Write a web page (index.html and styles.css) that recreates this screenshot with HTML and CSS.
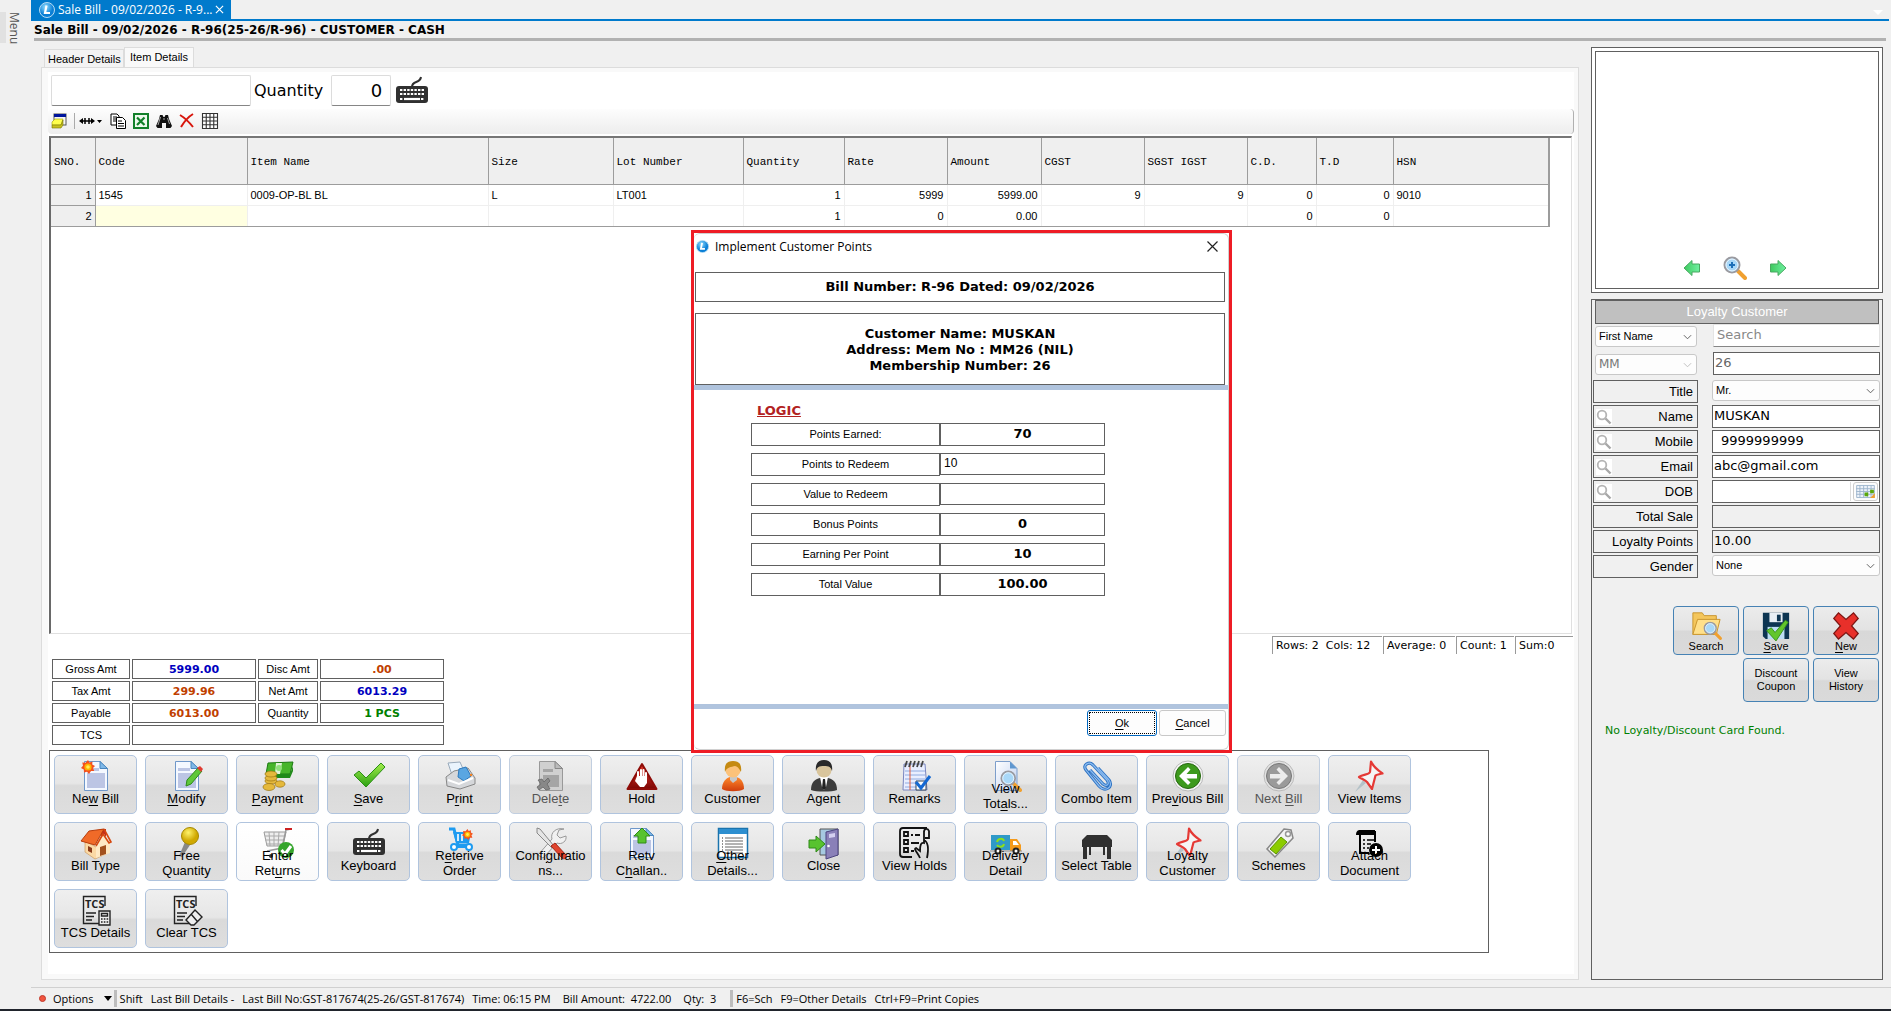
FILE: index.html
```html
<!DOCTYPE html>
<html lang="en">
<head>
<meta charset="utf-8">
<title>Sale Bill</title>
<link rel="stylesheet" href="styles.css">
</head>
<body>
<svg class="sprite" aria-hidden="true">
  <defs>
    <linearGradient id="gPaper" x1="0" y1="0" x2="1" y2="1"><stop offset="0" stop-color="#fff"/><stop offset="1" stop-color="#bfd0f0"/></linearGradient>
    <linearGradient id="gGreen" x1="0" y1="0" x2="0" y2="1"><stop offset="0" stop-color="#a4ee4c"/><stop offset="1" stop-color="#2aa012"/></linearGradient>
    <linearGradient id="gRed" x1="0" y1="0" x2="0" y2="1"><stop offset="0" stop-color="#e43a2c"/><stop offset="1" stop-color="#7c0705"/></linearGradient>
    <linearGradient id="gOrange" x1="0" y1="0" x2="0" y2="1"><stop offset="0" stop-color="#ff8a2b"/><stop offset="1" stop-color="#cf3d0c"/></linearGradient>
    <radialGradient id="gGold" cx=".4" cy=".3"><stop offset="0" stop-color="#fff36a"/><stop offset="1" stop-color="#d0a800"/></radialGradient>
    <radialGradient id="gLogo" cx=".4" cy=".3"><stop offset="0" stop-color="#8fdcff"/><stop offset="1" stop-color="#0a7fd6"/></radialGradient>
    <linearGradient id="gMint" x1="0" y1="0" x2="1" y2="0"><stop offset="0" stop-color="#3ec95f"/><stop offset="1" stop-color="#6ff0a0"/></linearGradient>
    <symbol id="doc" viewBox="0 0 32 32"><path d="M4.500 1.500H20l7.500 7V30.500H4.500z" fill="#f4f8ff" stroke="#6f97c9"/><path d="M7 8h12v3H7zM7 13h18v15H7z" fill="#bcc5e4"/><path d="M20 1.500v7h7.500z" fill="#7fb8e8" stroke="#4a86bd"/></symbol>
    <symbol id="spark" viewBox="0 0 14 14"><path d="M7 0l1.500 2.500L11.500 1.500l-.3 3L14 6l-2 2 1.200 3-3.200 0L8 14l-2-2.200L3 12.500l-.2-3L0 8l2-2.200L1.300 2.500l3.200.3z" fill="#f4511e"/><circle cx="7" cy="7" r="3.600" fill="#ffb300"/><circle cx="7" cy="7" r="1.800" fill="#ffee58"/></symbol>
    <symbol id="keyboard" viewBox="0 0 32 32"><path d="M16 12c0-7 8-3 9-10" fill="none" stroke="#303030" stroke-width="2"/><rect x="0" y="11" width="32" height="17" rx="3" fill="#303030"/><path d="M4 15h24M4 19h24M4 24h3M25 24h3" stroke="#fff" stroke-width="2.200" stroke-dasharray="2.400 1.200"/><path d="M8 24h16" stroke="#fff" stroke-width="2.200"/></symbol>
    <symbol id="pin" viewBox="0 0 32 32"><path d="M9 20L1 32l11-9z" fill="#b4c2c8"/><path d="M17 1.500c3 6 6 8 11.500 12-4 1-6 1-7 2L18 29l-5-7c-2-2-5-3-8-5 4-3 10-2 11-5z" fill="#f5f5f5" stroke="#e53935" stroke-width="2.200" stroke-linejoin="round"/></symbol>
    <symbol id="glass" viewBox="0 0 24 24"><path d="M15 15l7 7" stroke="#f0a030" stroke-width="4" stroke-linecap="round"/><circle cx="9" cy="9" r="7.500" fill="#a9d8f8" stroke="#9a9aa0" stroke-width="2"/><circle cx="9" cy="9" r="6" fill="none" stroke="#eaf6ff"/></symbol>
    <symbol id="lens" viewBox="0 0 16 16"><circle cx="6" cy="6" r="4.300" fill="none" stroke="#b4b4b4" stroke-width="1.800"/><path d="M9.500 9.500l5 5" stroke="#a8a8a8" stroke-width="2.400"/></symbol>
    <symbol id="chev" viewBox="0 0 10 6"><path d="M1 1l4 4 4-4" fill="none" stroke="currentColor"/></symbol>
    <symbol id="logo" viewBox="0 0 16 16"><circle cx="8" cy="8" r="7.500" fill="url(#gLogo)" stroke="#b7dcf3"/><path d="M7.500 3.500L6 11h5" fill="none" stroke="#fff" stroke-width="2.200"/></symbol>
    <symbol id="tcsdoc" viewBox="0 0 32 32"><path d="M25 12V2.500H3.500V29.500H19M6 19h10M6 22.500h8M6 26h6" fill="none" stroke="#222" stroke-width="1.400"/><text x="5" y="14" class="tcs">TCS</text></symbol>
  </defs>
</svg>
<div class="app">
  <aside class="rail"><button class="rail-menu" type="button">Menu</button></aside>
  <div class="shell">
    <nav class="doc-tabs">
      <div class="doc-tab"><svg class="i16"><use href="#logo"/></svg><span>Sale Bill - 09/02/2026 - R-9...</span><button class="tab-x" type="button" aria-label="Close tab"><svg viewBox="0 0 10 10"><path d="M1 1l8 8M9 1L1 9" stroke="#fff" stroke-width="1.300"/></svg></button></div>
      <svg class="strip-caret" viewBox="0 0 10 6"><path d="M0 1h10L5 6z" fill="#fff"/></svg>
    </nav>
    <h1 class="title">Sale Bill - 09/02/2026 - R-96(25-26/R-96) - CUSTOMER - CASH</h1>
    <div class="work">
      <main class="bill">
        <div class="tabs"><button class="tab" type="button">Header Details</button><button class="tab on" type="button">Item Details</button></div>
        <section class="panel"><div class="sheet">
          <div class="entry">
            <input class="field code" type="text" aria-label="Item code">
            <label for="qty">Quantity</label>
            <input class="field qty" id="qty" type="text" value="0">
            <button class="bare" type="button" aria-label="Keyboard"><svg class="i32"><use href="#keyboard"/></svg></button>
          </div>
          <div class="toolbar">
            <button class="bare" type="button" aria-label="Preview"><svg class="i16" viewBox="0 0 16 16"><rect x="3" y="1" width="12" height="11" fill="#f5f5f5" stroke="#555"/><path d="M3 1h12v3H3z" fill="#00159c"/><path d="M1 9l3-3h8l-2 6H1z" fill="#ffff4d" stroke="#9a9a00" stroke-width=".6"/><path d="M1 12h9l2-5v5l-2 3H1z" fill="#c8c020" stroke="#777700" stroke-width=".6"/></svg></button>
            <i class="vbar"></i>
            <button class="bare" type="button" aria-label="Column width"><svg class="i24" viewBox="0 0 24 16"><path d="M2 8h12M6 5v6M10 5v6" stroke="#000" stroke-width="1.500"/><path d="M0 8l4-3v6zM16 8l-4-3v6zM18 7h5l-2.500 3z"/></svg></button>
            <button class="bare" type="button" aria-label="Copy"><svg class="i16" viewBox="0 0 16 16"><path d="M1 1h6l2 2v9H1z" fill="#fff" stroke="#000"/><path d="M3 4h4M3 6h4M3 8h4" stroke="#000"/><path d="M6.500 4.500h6l3 3v8h-9z" fill="#fff" stroke="#000"/><path d="M8 8h4M8 10.500h6M8 13h6" stroke="#000"/></svg></button>
            <button class="bare" type="button" aria-label="Export to Excel"><svg class="i16" viewBox="0 0 16 16"><rect x="1" y="1" width="14" height="14" fill="#eefaee" stroke="#12802a" stroke-width="2"/><path d="M4 4.500l7.500 7.500M11.500 4.500L4 12" stroke="#12802a" stroke-width="2.200"/></svg></button>
            <button class="bare" type="button" aria-label="Find"><svg class="i16" viewBox="0 0 16 16"><path d="M4 2h2.500l1 2h1l1-2H12l1 4 3 7-1.500 2H10V10H6v5H1.500L0 13l3-7z" fill="#111"/><path d="M4.500 4L2 12M11.500 5l2 6M7 6h2" stroke="#ccc" stroke-width=".8"/></svg></button>
            <button class="bare" type="button" aria-label="Delete row"><svg class="i16" viewBox="0 0 16 16"><path d="M1 2c5 3 9 7 13 12M14 1C9 4 5 9 2 14" fill="none" stroke="#d8160c" stroke-width="2"/></svg></button>
            <button class="bare" type="button" aria-label="Grid"><svg class="i16" viewBox="0 0 16 16"><path d="M.5.500h15v15H.5zM4.250.500v15M8 .500v15M11.750.500v15M.5 4.250h15M.5 8h15M.5 11.750h15" fill="#fff" stroke="#333" stroke-width="1.100"/></svg></button>
          </div>
          <div class="grid">
            <table class="items">
              <colgroup><col class="w44"><col class="w152"><col class="w241"><col class="w125"><col class="w130"><col class="w101"><col class="w103"><col class="w94"><col class="w103"><col class="w103"><col class="w69"><col class="w77"><col class="wlast"></colgroup>
              <thead><tr><th>SNO.</th><th>Code</th><th>Item Name</th><th>Size</th><th>Lot Number</th><th>Quantity</th><th>Rate</th><th>Amount</th><th>CGST</th><th>SGST IGST</th><th>C.D.</th><th>T.D</th><th>HSN</th></tr></thead>
              <tbody>
                <tr><td class="n sno">1</td><td>1545</td><td>0009-OP-BL BL</td><td>L</td><td>LT001</td><td class="n">1</td><td class="n">5999</td><td class="n">5999.00</td><td class="n">9</td><td class="n">9</td><td class="n">0</td><td class="n">0</td><td>9010</td></tr>
                <tr><td class="n sno">2</td><td class="cur"></td><td></td><td></td><td></td><td class="n">1</td><td class="n">0</td><td class="n">0.00</td><td></td><td></td><td class="n">0</td><td class="n">0</td><td></td></tr>
              </tbody>
            </table>
          </div>
          <div class="counts"><span class="c1">Rows: 2&nbsp; Cols: 12</span><span class="c2">Average: 0</span><span class="c3">Count: 1</span><span class="c3">Sum:0</span></div>
          <div class="totals">
            <span>Gross Amt</span><b class="blue">5999.00</b><span>Disc Amt</span><b class="rust">.00</b>
            <span>Tax Amt</span><b class="rust">299.96</b><span>Net Amt</span><b class="blue">6013.29</b>
            <span>Payable</span><b class="rust">6013.00</b><span>Quantity</span><b class="green">1 PCS</b>
            <span>TCS</span><b class="wide"></b>
          </div>
          <div class="tiles">
            <button class="tile" type="button"><svg viewBox="0 0 32 32"><use href="#doc"/><use href="#spark" x="1" y="0" width="14" height="14"/></svg><span>Ne<u>w</u> Bill</span></button>
            <button class="tile" type="button"><svg viewBox="0 0 32 32"><use href="#doc"/><path d="M27 8l4 3-11 13-5 2 1-6z" fill="#5fc83a" stroke="#2f8a18"/><path d="M26 8l3-2 3 3-2 3z" fill="#e03a30"/></svg><span><u>M</u>odify</span></button>
            <button class="tile" type="button"><svg viewBox="0 0 32 32"><path d="M6 3l25-1-3 12H4z" fill="#46b52a" stroke="#1c7a12"/><path d="M4 14h24l3-8v5l-3 7H5z" fill="#1f8a18"/><path d="M14 3h6l-2 11h-5z" fill="#dff3d6"/><circle cx="17" cy="8" r="3" fill="#8fe07a"/><g fill="#e5b93c" stroke="#9c7410" stroke-width=".7"><ellipse cx="9" cy="21" rx="6" ry="3"/><ellipse cx="9" cy="18" rx="6" ry="3"/><ellipse cx="9" cy="14" rx="6" ry="3"/><ellipse cx="7" cy="27" rx="6" ry="3.500"/><ellipse cx="18" cy="24" rx="5" ry="3.200"/></g></svg><span><u>P</u>ayment</span></button>
            <button class="tile" type="button"><svg viewBox="0 0 32 32"><path d="M1 15l5-4 7 7L28 3l4 4-19 20z" fill="url(#gGreen)" stroke="#2a8f14"/></svg><span><u>S</u>ave</span></button>
            <button class="tile" type="button"><svg viewBox="0 0 32 32"><path d="M4 3l12-1 4 9-12 4z" fill="#eaf4fd" stroke="#9ab"/><path d="M2 17l8-6 14-3 7 10v6l-15 5-13-3z" fill="#d5d7da" stroke="#888"/><path d="M15 9l7-2 5 9-7 5-6-4z" fill="#5aa6e2" stroke="#2c79bd"/><path d="M4 20l11 4 14-6" fill="none" stroke="#fff" stroke-width="2"/><circle cx="27" cy="15" r="1.200" fill="#f58220"/></svg><span>P<u>r</u>int</span></button>
            <button class="tile" type="button" disabled><svg viewBox="0 0 32 32"><path d="M4.500 1.500H20l7.500 7V30.500H4.500z" fill="#d0d0d0" stroke="#999"/><path d="M8 9h10v3H8zM8 15h16v12H8z" fill="#a5a5a5"/><path d="M20 1.500v7h7.500z" fill="#bbb" stroke="#888"/><path d="M3 20l4-1 2 3 4-4 2 3-3 3 3 5-4 1-3-3-4 3-2-3 4-3z" fill="#888" stroke="#666" stroke-width=".8"/></svg><span>Dele<u>t</u>e</span></button>
            <button class="tile" type="button"><svg viewBox="0 0 32 32"><path d="M16 4L30.500 29H1.500z" fill="url(#gRed)" stroke="#8e0c08" stroke-linejoin="round" stroke-width="2"/><path d="M12 18v-6m3 5v-7m2.500 7v-7m2.500 8v-5" stroke="#fff" stroke-width="2" stroke-linecap="round"/><path d="M11 16h10v7l-3 4h-4l-5-6z" fill="#fff"/></svg><span>Hold</span></button>
            <button class="tile" type="button"><svg viewBox="0 0 32 32"><path d="M5 29c0-7 4-11 8-12h6c5 1 8 5 8 12-4 3-18 3-22 0z" fill="url(#gOrange)"/><path d="M13 15h7v5l-4 3-3-3z" fill="#c8c8c8"/><circle cx="16" cy="10" r="7.500" fill="#fcc27a"/><path d="M8 12C7 4 10 1 16 1s9 3 8 11c-2-4-4-6-6-6-4 1-8 1-10 6z" fill="#c58a12"/></svg><span>Customer</span></button>
            <button class="tile" type="button"><svg viewBox="0 0 32 32"><path d="M3 30c0-8 4-11 9-12h8c5 1 9 4 9 12-5 2-21 2-26 0z" fill="#3c3c3c"/><path d="M12 17h8l-2 10-2 3-2-3z" fill="#fff"/><path d="M15 19h2l1 9-2 2-2-2z" fill="#222"/><circle cx="16" cy="10" r="7.500" fill="#d9c59c"/><path d="M8 11C7 4 10 0 16 0s9 4 8 11c-1-4-3-5-8-5s-7 1-8 5z" fill="#2a2a2a"/></svg><span>Agent</span></button>
            <button class="tile" type="button"><svg viewBox="0 0 32 32"><path d="M5 4h21l2 26H4z" fill="#e9eeff" stroke="#7a86c0"/><path d="M6 11h20M6 15h20M6 19h20M6 23h20M6 27h20" stroke="#7a9ad8" stroke-width=".8"/><path d="M11 5v25" stroke="#e05a3a"/><path d="M6 7l2-6m2 6l2-6m2 6l2-6m2 6l2-6m2 6l2-6" stroke="#444" stroke-width="1.800"/><path d="M17 21h10v9H17z" fill="#fff" stroke="#345"/><path d="M17 22l5 6 9-12" fill="none" stroke="#1468d2" stroke-width="3"/></svg><span>Remarks</span></button>
            <button class="tile two" type="button"><svg viewBox="0 0 32 32"><path d="M5.500 1.500H20l7 7v22H5.500z" fill="url(#gPaper)" stroke="#7d9ecb"/><path d="M20 1.500v7h7z" fill="#5f97cf"/><use href="#glass" x="10" y="10" width="22" height="22"/></svg><span>View<br>Tot<u>a</u>ls...</span></button>
            <button class="tile" type="button"><svg viewBox="0 0 32 32"><path d="M9 10l13 14c4 3 7 0 4-4L12 5C8 1 1 5 5 10l13 16c6 7 15 1 10-6L17 8" fill="none" stroke="#2f74c4" stroke-width="3.200"/><path d="M9 10l13 14c4 3 7 0 4-4L12 5C8 1 1 5 5 10l13 16c6 7 15 1 10-6L17 8" fill="none" stroke="#8cbcf0" stroke-width="1.200"/></svg><span>Combo Item</span></button>
            <button class="tile" type="button"><svg viewBox="0 0 32 32"><circle cx="16" cy="16" r="15" fill="#f5f5f5" stroke="#b8b8b8"/><circle cx="16" cy="16" r="12.500" fill="#3d9a1c" stroke="#25660e"/><path d="M7 16l9-9 2.500 2.500L14.500 14H25v4.500H14.500l4 4L16 25z" fill="#fff"/></svg><span>Pre<u>v</u>ious Bill</span></button>
            <button class="tile" type="button" disabled><svg viewBox="0 0 32 32"><circle cx="16" cy="16" r="15" fill="#e2e2e2" stroke="#bbb"/><circle cx="16" cy="16" r="12.500" fill="#9a9a9a" stroke="#777"/><path d="M25 16l-9-9-2.500 2.500 4 4.500H7v4.500h10.500l-4 4L16 25z" fill="#ececec"/></svg><span>Next <u>B</u>ill</span></button>
            <button class="tile" type="button"><svg><use href="#pin"/></svg><span>View Items</span></button>

            <button class="tile" type="button"><svg viewBox="0 0 32 32"><path d="M21 2h5v9h-5z" fill="#c42b1c"/><path d="M5 14l11 6 12-3v9L15 32 5 25z" fill="#fbd9a5" stroke="#c89050" stroke-width=".6"/><path d="M16 18l8-11 6 9v10l-14 5z" fill="#ffe9c4"/><path d="M1 14L9 4l15-2-9 16z" fill="#f06a28" stroke="#b83d0c"/><path d="M24 2l7 13-2 1-6-9-7 12" fill="none" stroke="#d5480f" stroke-width="1.600"/><path d="M20 20l6-2v9l-6 2z" fill="#a3511d"/><path d="M8 19l4 2v5l-4-2z" fill="#8a3b1a"/></svg><span>Bill Type</span></button>
            <button class="tile two" type="button"><svg viewBox="0 0 32 32"><path d="M14 15l5 3-8 12-3-1z" fill="#888"/><circle cx="19" cy="9" r="8.500" fill="url(#gGold)" stroke="#a58800"/></svg><span>Free<br>Quantity</span></button>
            <button class="tile two hot" type="button"><svg viewBox="0 0 32 32"><path d="M2 5h22l-3 14H5z" fill="#eee" stroke="#999"/><path d="M3 9h20M3 13h19M4 17h18M7 5l1 14M12 5v14M17 5l-1 14" stroke="#aaa"/><path d="M29 2l-5 1-4 18-15 3" fill="none" stroke="#999" stroke-width="1.500"/><path d="M23 2h7" stroke="#c22" stroke-width="2"/><circle cx="9" cy="29" r="2" fill="#333"/><circle cx="24" cy="23" r="8" fill="#35a52c"/><path d="M19.500 23l3.500 4 6-8" fill="none" stroke="#fff" stroke-width="3"/></svg><span>Enter<br>Ret<u>u</u>rns</span></button>
            <button class="tile" type="button"><svg><use href="#keyboard"/></svg><span>Keyboard</span></button>
            <button class="tile two" type="button"><svg viewBox="0 0 32 32"><path d="M5 2h5l4 16h12" fill="none" stroke="#1e9bf0" stroke-width="3"/><path d="M9 5h18l-2 11H12z" fill="#1e9bf0"/><path d="M14 7v7M18 7v7" stroke="#fff" stroke-width="1.600"/><circle cx="10" cy="20" r="3" fill="#fff" stroke="#1e9bf0" stroke-width="2"/><circle cx="25" cy="20" r="3" fill="#fff" stroke="#1e9bf0" stroke-width="2"/><path d="M12 20h11" stroke="#1e9bf0" stroke-width="2"/><use href="#spark" x="18" y="2" width="11" height="11"/></svg><span>R<u>e</u>terive<br>Order</span></button>
            <button class="tile two" type="button"><svg viewBox="0 0 32 32"><path d="M29 2l-5 1-2 5 3 3 6-2c1 5-4 9-9 7L8 31l-5-3L17 12c-2-6 4-12 12-10z" fill="#f1f1f1" stroke="#999"/><path d="M2 1l3 1 14 17-2 2L2 6z" fill="#e5e5e5" stroke="#888"/><path d="M16 19l4-3 11 12c1 3-2 5-4 3z" fill="#e0452e" stroke="#a82413"/></svg><span>Confi<u>g</u>uratio<br>ns...</span></button>
            <button class="tile two" type="button"><svg viewBox="0 0 32 32"><use href="#doc"/><path d="M16 1l8 8h-4v7h-8V9H8z" fill="#58c32f" stroke="#2f8a18"/></svg><span>Retv<br>C<u>h</u>allan..</span></button>
            <button class="tile two" type="button"><svg viewBox="0 0 32 32"><rect x="1.500" y="1.500" width="29" height="29" fill="#fff" stroke="#1b73ad" stroke-width="1.500"/><path d="M2 2h28v5H2z" fill="#2d8fd0"/><path d="M8 11h18M8 14h18M8 17h18M8 20h18M8 23h18M8 26h18" stroke="#666"/><path d="M5 11h1M5 14h1M5 17h1M5 20h1M5 23h1" stroke="#222"/></svg><span><u>O</u>ther<br>Details...</span></button>
            <button class="tile" type="button"><svg viewBox="0 0 32 32"><path d="M12 2h18v26H12z" fill="#a6c9e0" stroke="#555"/><path d="M18 5l12-3v26l-12 4z" fill="#8a80b8" stroke="#4d4580"/><path d="M21 7l6-1v4l-6 1z" fill="#d4d0f0"/><circle cx="20.500" cy="19" r="1.300" fill="#fff"/><path d="M1 13h7V9l9 8-9 8v-4H1z" fill="#58c32f" stroke="#2f8a18"/></svg><span>Close</span></button>
            <button class="tile" type="button"><svg viewBox="0 0 32 32" fill="none" stroke="#111" stroke-width="1.800"><path d="M25 10V5c0-4 4-4 5-1v7h-4M28 1H4C2 1 1 2 1 4v23c0 2 1 3 3 3h9M25 4v12c-3-1-4 2-4 8l-4-3c-3 1 2 5 4 10M25 13c4 2 5 8 3 18"/><path d="M5 5h4v4H5zM5 13h4v4H5zM5 21h4v4H5zM12 8h2M16 8h5M12 16h8M12 24h3"/></svg><span>View Holds</span></button>
            <button class="tile two" type="button"><svg viewBox="0 0 32 32"><path d="M1 8h19v15H1z" fill="#2f9ac8"/><path d="M20 12h7l4 6v6H20z" fill="#f59a1a"/><path d="M23 14h3l3 4h-6z" fill="#fff"/><path d="M7 15c1-4 6-4 7-1m0 3c-1 4-6 3-7 1" fill="none" stroke="#8de01a" stroke-width="2"/><path d="M0 24h32" stroke="#888"/><g fill="#fff" stroke="#222" stroke-width="2"><circle cx="8" cy="24" r="2.500"/><circle cx="26" cy="24" r="2.500"/></g></svg><span>Delivery<br>Detail</span></button>
            <button class="tile" type="button"><svg viewBox="0 0 32 32" fill="#303030"><path d="M6 8h20l5 5v7H1v-7z"/><path d="M2 19h4v13H2zM26 19h4v13h-4zM8 20h2v8H8zM22 20h2v8h-2z"/></svg><span>Select Table</span></button>
            <button class="tile two" type="button"><svg><use href="#pin"/></svg><span>Loyalty<br>Customer</span></button>
            <button class="tile" type="button"><svg viewBox="0 0 32 32"><path d="M21 2l7 1 2 8-18 19-8-8z" fill="#f4f4f4" stroke="#888" stroke-width="1.500"/><path d="M18 10l6 5-11 12-6-5z" fill="#8ccc00" stroke="#5c9400"/><circle cx="25" cy="7" r="2.500" fill="#fff" stroke="#999" stroke-width="1.500"/></svg><span>Schemes</span></button>
            <button class="tile two" type="button"><svg viewBox="0 0 32 32"><path d="M2 8c0-4 2-5 4-5h15v5z"/><path d="M6 6v20h9M21 4v11" fill="none" stroke="#000" stroke-width="2"/><path d="M9 13h2m2 0h7M9 17h2m2 0h4M9 21h2m2 0h2" stroke="#000" stroke-width="1.600"/><circle cx="22" cy="23" r="7"/><path d="M18 23h8M22 19v8" stroke="#fff" stroke-width="2"/></svg><span>Attach<br>Document</span></button>

            <button class="tile" type="button"><svg viewBox="0 0 32 32"><use href="#tcsdoc"/><path d="M19 17h11v14H19zM21.500 19.500h6v2.500h-6z" fill="#eee" stroke="#222" stroke-width="1.400"/><path d="M21 25h8M21 28h8" stroke="#222" stroke-width="1.600" stroke-dasharray="1.600 1.200"/></svg><span>TCS Details</span></button>
            <button class="tile" type="button"><svg viewBox="0 0 32 32"><use href="#tcsdoc"/><path d="M24 16l7 7-8 8h-3l-5-5zM20 20l6 7" fill="#eee" stroke="#222" stroke-width="1.400"/></svg><span>Clear TCS</span></button>
          </div>
        </div></section>
      </main>
      <aside class="side">
        <section class="photo"><div class="photo-in">
          <button class="bare" type="button" aria-label="Previous"><svg class="i16" viewBox="0 0 16 16"><path d="M0 8l8-7.500V4h7.500v8H8v3.500z" fill="url(#gMint)" stroke="#48a860"/></svg></button>
          <button class="bare" type="button" aria-label="Zoom"><svg class="i24"><use href="#glass"/><path d="M6 9h6M9 6v6" stroke="#1d6fb8" stroke-width="2"/></svg></button>
          <button class="bare" type="button" aria-label="Next"><svg class="i16" viewBox="0 0 16 16"><path d="M16 8L8 .500V4H.500v8H8v3.500z" fill="url(#gMint)" stroke="#48a860"/></svg></button>
        </div></section>
        <section class="loyal">
          <h2>Loyalty Customer</h2>
          <form class="search">
            <span class="pick"><select aria-label="Search by"><option>First Name</option></select><svg><use href="#chev"/></svg></span>
            <input class="v soft" type="text" placeholder="Search" aria-label="Search text">
            <span class="pick off"><select aria-label="Series" disabled><option>MM</option></select><svg><use href="#chev"/></svg></span>
            <input class="v dim" type="text" value="26" aria-label="Member number">
          </form>
          <form class="fields">
            <label for="f1">Title</label><span class="pick"><select id="f1"><option>Mr.</option></select><svg><use href="#chev"/></svg></span>
            <label for="f2"><svg><use href="#lens"/></svg>Name</label><input class="v" id="f2" type="text" value="MUSKAN">
            <label for="f3"><svg><use href="#lens"/></svg>Mobile</label><input class="v in" id="f3" type="text" value="9999999999">
            <label for="f4"><svg><use href="#lens"/></svg>Email</label><input class="v" id="f4" type="text" value="abc@gmail.com">
            <label for="f5"><svg><use href="#lens"/></svg>DOB</label><span class="date"><input id="f5" type="text"><button type="button" aria-label="Pick date"><svg viewBox="0 0 20 14"><path d="M.5.500h19v13H.5zM4 .500v13M8 .500v13M12 .500v13M16 .500v13M0 4h20M0 7h20M0 10h20" fill="#eef3fa" stroke="#9db4cc"/><path d="M9 8h4v4H9zM15 5h4v4h-4z" fill="#5aa80a"/><path d="M15 14l5-5v5z" fill="#f0a030"/></svg></button></span>
            <label for="f6">Total Sale</label><input class="v ro" id="f6" type="text" readonly>
            <label for="f7">Loyalty Points</label><input class="v ro" id="f7" type="text" value="10.00" readonly>
            <label for="f8">Gender</label><span class="pick"><select id="f8"><option>None</option></select><svg><use href="#chev"/></svg></span>
          </form>
          <div class="acts">
            <button class="act" type="button"><svg viewBox="0 0 32 32"><path d="M2 3h10l2 3h13v20H2z" fill="#f4c65c" stroke="#c8932c"/><path d="M7 10h24l-4 16H2z" fill="#ffe08a" stroke="#c8932c"/><use href="#glass" x="13" y="12" width="20" height="20"/></svg><span>Search</span></button>
            <button class="act" type="button"><svg viewBox="0 0 32 32"><path d="M2 3h28v28H5l-3-3z" fill="#0d3552"/><path d="M9 3h14v10H9z" fill="#e8eef4"/><path d="M17 5h4v7h-4z" fill="#0d3552"/><path d="M7 18h18v13H7z" fill="#bcdcf4"/><path d="M6 22l5-3 4 5 11-13 3 2-13 20z" fill="#63c62c" stroke="#38921a"/></svg><span><u>S</u>ave</span></button>
            <button class="act" type="button"><svg viewBox="0 0 32 32"><path d="M3 9l5-6 8 7 8-7 5 6-7 8 7 8-5 6-8-7-8 7-5-6 7-8z" fill="#e8302a" stroke="#7c1512" stroke-width="1.400"/></svg><span><u>N</u>ew</span></button>
            <button class="act txt second" type="button">Discount<br>Coupon</button>
            <button class="act txt" type="button">View<br>History</button>
          </div>
          <p class="note">No Loyalty/Discount Card Found.</p>
        </section>
      </aside>
    </div>
    <footer class="status">
      <i class="led"></i><button class="opts" type="button">Options<svg viewBox="0 0 8 5"><path d="M0 0h8L4 5z"/></svg></button><i class="sep"></i>
      <span class="s1">Shift</span><span class="s1">Last Bill Details -</span><span class="s1">Last Bill No:GST-817674(25-26/GST-817674)</span><span class="s2">Time: 06:15 PM</span><span class="s2">Bill Amount:&nbsp; 4722.00</span><span class="s2">Qty:&nbsp; 3</span><i class="sep"></i>
      <span class="s1">F6=Sch</span><span class="s1">F9=Other Details</span><span>Ctrl+F9=Print Copies</span>
    </footer>
  </div>
</div>

<div class="modal" role="dialog" aria-labelledby="dlg">
  <div class="win">
    <header class="bar"><svg class="i14"><use href="#logo"/></svg><h2 id="dlg">Implement Customer Points</h2><button class="bare" type="button" aria-label="Close"><svg viewBox="0 0 11 11"><path d="M.5.500l10 10M10.500.500l-10 10" stroke="#222" stroke-width="1.200"/></svg></button></header>
    <div class="box one">Bill Number: R-96 Dated: 09/02/2026</div>
    <div class="box three">Customer Name: MUSKAN<br>Address: Mem No : MM26 (NIL)<br>Membership Number: 26</div>
    <form class="logic">
      <h3>LOGIC</h3>
      <div class="pair"><span>Points Earned:</span><b>70</b></div>
      <div class="pair"><label for="redeem">Points to Redeem</label><input id="redeem" type="text" value="10"></div>
      <div class="pair"><label for="value">Value to Redeem</label><input id="value" type="text"></div>
      <div class="pair"><span>Bonus Points</span><b>0</b></div>
      <div class="pair"><span>Earning Per Point</span><b>10</b></div>
      <div class="pair"><span>Total Value</span><b>100.00</b></div>
    </form>
    <div class="foot"><button class="ok" type="button"><u>O</u>k</button><button class="cancel" type="button"><u>C</u>ancel</button></div>
  </div>
</div>
</body>
</html>
```
FILE: styles.css
```css
* { box-sizing: border-box; }
:root {
  --sans: "Liberation Sans", Arial, sans-serif;
  --wide: "DejaVu Sans", Verdana, sans-serif;
  --ui: "Open Sans", "Segoe UI", sans-serif;
  --line: #606060;
  --face: #f0f0f0;
}
body { margin: 0; background: var(--face); color: #000; font: 11px/14px var(--sans); }
h1, h2, h3, p { margin: 0; font-size: inherit; font-weight: inherit; }
button, input, select { font: inherit; color: inherit; margin: 0; }
svg { display: block; overflow: visible; }
.sprite { position: absolute; width: 0; height: 0; }
.tcs { font: bold 11px "Open Sans", sans-serif; fill: #222; }
.bare { border: 0; padding: 0; background: none; }
.i14 { width: 14px; height: 14px; }
.i16 { width: 16px; height: 16px; }
.i24 { width: 24px; height: 24px; }
.i32 { width: 32px; height: 32px; }
.toolbar .i24 { height: 16px; }

.app { display: flex; min-height: 100vh; border-bottom: 2px solid #20242c; }
.rail { width: 31px; padding-top: 12px; flex: none; }
.rail-menu { writing-mode: vertical-rl; height: 31px; width: 25px; padding: 0 3px 0 0; border: 0; border-left: 6px solid #e1e1e1; background: none; color: #555; font: 12px/16px var(--ui); text-align: left; }
.shell { flex: 1; min-width: 0; display: flex; flex-direction: column; }

.doc-tabs { display: flex; justify-content: space-between; height: 21px; margin-right: 2px; border-bottom: 2px solid #007acc; flex: none; }
.doc-tab { display: flex; align-items: center; gap: 3px; width: 200px; padding: 0 7px 0 8px; background: #007acc; color: #fff; font: 12px/19px var(--ui); white-space: nowrap; }
.doc-tab span { flex: 1; }
.tab-x { border: 0; padding: 0; background: none; }
.tab-x svg { width: 9px; height: 9px; }
.strip-caret { width: 10px; height: 6px; margin: 9px 6px 0; }
.title { margin: 0 5px 0 3px; height: 20px; border-bottom: 3px solid #b1b1b1; font: bold 12px/18px var(--wide); flex: none; }

.work { flex: 1; display: flex; gap: 12px; padding: 6px 8px 7px 10px; }
.bill { flex: 1; min-width: 0; display: flex; flex-direction: column; }
.tabs { display: flex; align-items: flex-end; height: 21px; padding-left: 3px; margin-bottom: -1px; flex: none; }
.tab { height: 19px; padding: 0 3px; border: 1px solid #dcdcdc; border-bottom: 0; background: #f3f3f3; width: 80px; white-space: nowrap; }
.tab.on { height: 21px; width: 70px; padding-bottom: 3px; background: #f9f9f9; }
.panel { flex: 1; display: flex; padding: 4px 4px 5px 6px; border: 1px solid #dcdcdc; background: #f9f9f9; }
.sheet { flex: 1; min-width: 0; display: flex; flex-direction: column; padding: 3px 0 21px; background: #fff; }
.entry { display: flex; align-items: center; height: 31px; padding-left: 3px; font: 16px/20px var(--wide); }
.field { height: 31px; border: 1px solid #dcdcdc; border-bottom-color: #868686; border-radius: 2px; background: #fff; }
.code { width: 200px; margin-right: 3px; }
.qty { width: 60px; margin: 0 5px 0 8px; padding: 0 8px; text-align: right; font-size: 18px; }
.toolbar { display: flex; align-items: center; gap: 7px; height: 25px; margin-top: 3px; padding: 0 0 2px 3px; background: linear-gradient(#fdfdfd, #ededed); border-right: 1px solid #b0b0b0; border-radius: 4px; }
.vbar { width: 1px; height: 16px; margin: 0 -3px 0 0; background: #aaa; }
.grid { flex: 1; margin: 2px 2px 0 1px; border: 1px solid #e0e0e0; border-top: 2px solid #767676; border-left: 2px solid #696969; }
.items { width: calc(100% - 21px); table-layout: fixed; border-collapse: collapse; border-right: 2px solid #9c9c9c; border-bottom: 1px solid #9c9c9c; }
.items th { height: 46px; padding: 2px 3px 0; border: 1px solid #9c9c9c; border-width: 0 1px 1px 0; background: #efefef; font: 11px/14px "Liberation Mono", "Courier New", monospace; text-align: left; }
.items td { height: 21px; padding: 0 3px; border: 1px solid #efefef; border-width: 0 1px 1px 0; }
.items tr:last-child td { border-bottom-color: #9c9c9c; }
.items .n { text-align: right; }
.items .sno { border-color: #9c9c9c; background: #efefef; }
.items .cur { background: #ffffe1; }
.w44 { width: 44px; } .w152 { width: 152px; } .w241 { width: 241px; } .w125 { width: 125px; } .w130 { width: 130px; }
.w101 { width: 101px; } .w103 { width: 103px; } .w94 { width: 94px; } .w69 { width: 69px; } .w77 { width: 77px; }
.counts { display: flex; justify-content: flex-end; gap: 1px; height: 18px; margin: 2px 1px 5px 0; font: 11px/18px var(--wide); white-space: nowrap; }
.counts span { border-top: 1px solid #999; border-left: 1px solid #999; padding-left: 3px; }
.c1 { width: 110px; } .c2 { width: 72px; } .c3 { width: 58px; }
.totals { display: grid; grid-template-columns: 78px 124px 60px 124px; grid-auto-rows: 20px; gap: 2px; padding-left: 4px; text-align: center; line-height: 18px; }
.totals > * { border: 1px solid var(--line); }
.totals b { font: bold 11px/19px var(--wide); }
.totals .wide { grid-column: span 3; }
.blue { color: #0000c0; } .rust { color: #c04000; } .green { color: #008000; }
.tiles { display: grid; grid-template-columns: repeat(15, 83px); gap: 8px; align-content: start; width: 1440px; max-width: 100%; height: 203px; margin: 5px 0 0 1px; padding: 4px; border: 1px solid var(--line); grid-auto-rows: 59px; }
.tile { display: grid; justify-items: center; padding: 0; border: 1px solid #b0c4de; border-radius: 5px; background: linear-gradient(#efefef, #e6e6e6 48%, #dadada 52%, #dedede); font: 13px/15px var(--sans); }
.tile svg { grid-area: 1 / 1; width: 32px; height: 32px; margin-top: 4px; }
.tile span { grid-area: 1 / 1; align-self: end; padding-bottom: 7px; z-index: 1; }
.tile.two span { padding-bottom: 2px; }
.tile.hot { background: linear-gradient(#fff, #fafafa); }
.tile:disabled { color: #555; border-color: #c2cfe0; }
u { text-underline-offset: 2px; }

.side { width: 292px; flex: none; display: flex; flex-direction: column; gap: 6px; }
.photo { height: 246px; padding: 3px; border: 1px solid var(--line); background: #fff; }
.photo-in { display: flex; justify-content: center; align-items: flex-end; gap: 23px; height: 100%; padding: 0 4px 8px 0; border: 1px solid var(--line); }
.photo-in .i16 { margin-bottom: 4px; }
.loyal { flex: 1; border: 1px solid var(--line); padding: 0 1px; }
.loyal h2 { margin: 0 2px; height: 24px; border: 1px solid var(--line); background: #c0c0c0; color: #fff; font: 13px/22px var(--sans); text-align: center; }
.search { display: grid; grid-template-columns: 102px minmax(0, 1fr); gap: 5px 16px; padding: 0 1px 0 2px; align-items: start; }
.fields { display: grid; grid-template-columns: 105px minmax(0, 1fr); gap: 2px 14px; padding-top: 5px; padding-right: 1px; }
.fields label { display: flex; align-items: center; justify-content: flex-end; height: 23px; padding: 0 4px 0 2px; border: 1px solid var(--line); font: 13px/21px var(--sans); }
.fields label svg { width: 16px; height: 16px; margin-right: auto; background: #fff; }
.pick { display: grid; height: 21px; background: #fdfdfd; border: 1px solid #c8c8c8; border-radius: 3px; align-items: center; }
.search .pick { margin-top: 2px; }
.pick select { grid-area: 1 / 1; appearance: none; width: 100%; height: 19px; border: 0; background: none; padding: 0 3px; font: 11px/19px var(--sans); }
.pick svg { grid-area: 1 / 1; justify-self: end; width: 9px; height: 6px; margin-right: 4px; color: #555; pointer-events: none; }
.pick.off, .pick.off select { color: #777; opacity: 1; }
.pick.off select { font-size: 12px; font-family: var(--wide); }
.pick.off svg { color: #bbb; }
.v { width: 100%; min-width: 0; height: 23px; border: 1px solid var(--line); border-radius: 0; padding: 0 1px 2px; background: #fff; font: 13px/20px var(--wide); }
.v.in { padding-left: 8px; }
.v.soft { border: 1px solid #e4e4e4; border-bottom-color: #868686; padding: 0 3px 2px; }
.v.dim { color: #666; }
.v.soft::placeholder { color: #888; opacity: 1; }
.v.ro { background: var(--face); }
.date { display: flex; height: 23px; border: 1px solid var(--line); background: #fff; padding: 1px; gap: 2px; }
.date input { flex: 1; min-width: 0; border: 0; padding: 0; border-right: 1px solid #ddd; background: #fff; }
.date button { width: 25px; padding: 2px; border: 1px solid #ccc; border-radius: 3px; background: #fdfdfd; }
.date svg { width: 19px; height: 13px; }
.acts { display: grid; grid-template-columns: repeat(3, 66px); grid-template-rows: 49px 44px; gap: 3px 4px; justify-content: end; margin: 28px 2px 0 0; }
.act { display: grid; justify-items: center; padding: 0; border: 1px solid #4682b4; border-radius: 4px; background: linear-gradient(#ececec, #e3e3e3 48%, #d8d8d8 52%, #dadada); font: 11px/13px var(--sans); }
.act svg { grid-area: 1 / 1; width: 30px; height: 30px; margin-top: 3px; }
.act span { grid-area: 1 / 1; align-self: end; padding-bottom: 1px; z-index: 1; }
.act.txt { display: block; }
.act.second { grid-column: 2; }
.note { margin: 21px 0 0 12px; color: #008000; font: 11px/16px var(--wide); }

.status { display: flex; align-items: center; height: 22px; border-top: 1px solid #d0d0d0; padding-left: 8px; font: 11px/18px var(--ui); white-space: nowrap; flex: none; }
.led { width: 7px; height: 7px; margin-right: 7px; border: 1px solid #c0392b; border-radius: 50%; background: #f0553f; }
.opts { display: flex; align-items: center; gap: 10px; padding: 0; border: 0; background: none; }
.opts svg { width: 8px; height: 5px; }
.sep { width: 3px; height: 17px; margin: 0 3px 0 2px; background: #bdbdbd; }
.s1 { margin-right: 8px; }
.s2 { margin-right: 12px; }

/* Dialog floats above the bill window */
.modal { position: absolute; left: 691px; top: 230px; width: 541px; height: 523px; border: 3px solid #ee1c25; background: #fff; }
.win { display: flex; flex-direction: column; height: 100%; border: 1px solid #d0d0d0; border-left: 0; border-radius: 6px; }
.bar { display: flex; align-items: center; gap: 6px; height: 25px; padding: 0 10px 0 2px; font: 12px/24px var(--ui); }
.bar h2 { flex: 1; }
.bar svg { width: 13px; height: 13px; }
.bar button svg { width: 11px; height: 11px; }
.box { margin: 0 3px 0 1px; border: 1px solid var(--line); text-align: center; font: bold 13px/16px var(--wide); }
.one { margin-top: 13px; height: 30px; padding-top: 6px; }
.three { margin-top: 11px; height: 72px; padding-top: 12px; }
.logic { flex: 1; border: solid #b0c4de; border-width: 5px 0; padding: 13px 0 0 57px; }
.logic h3 { margin: 0 0 4px 6px; height: 16px; color: #b22222; font: bold 13px/16px var(--wide); text-decoration: underline; }
.pair { display: grid; grid-template-columns: 189px 165px; height: 22px; margin-bottom: 8px; text-align: center; line-height: 21px; }
.pair > * { border: 1px solid var(--line); }
.pair b { font: bold 13px/20px var(--wide); }
.pair input { width: 100%; height: 22px; padding: 0 3px 2px; background: #fff; font-size: 12px; }
.foot { display: flex; justify-content: flex-end; gap: 2px; height: 40px; padding: 1px 2px; }
.foot button { height: 26px; border-radius: 3px; background: #fdfdfd; padding: 0; }
.ok { width: 70px; border: 1px solid #0067c0; outline: 1px dotted #000; outline-offset: -3px; }
.cancel { width: 67px; border: 1px solid #c8c8c8; }
```
